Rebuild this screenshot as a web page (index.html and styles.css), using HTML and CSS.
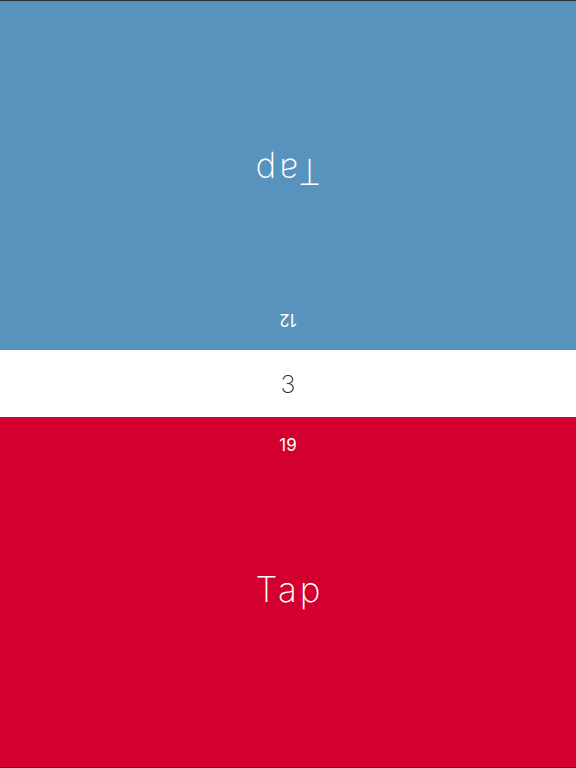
FILE: index.html
```html
<!DOCTYPE html>
<html lang="en">
<head>
<meta charset="utf-8">
<title>Tap Duel</title>
<link rel="stylesheet" href="styles.css">
</head>
<body>
  <main class="board">
    <section class="player player--blue player--flipped">
      <div class="player__score">12</div>
      <div class="player__tap">Tap</div>
    </section>
    <div class="timer">3</div>
    <section class="player player--red">
      <div class="player__score">19</div>
      <div class="player__tap">Tap</div>
    </section>
  </main>
</body>
</html>
```
FILE: styles.css
```css
html, body {
  margin: 0;
  padding: 0;
}

body {
  width: 576px;
  height: 768px;
  overflow: hidden;
  background: #26303a;
  font-family: Inter, "Helvetica Neue", "Liberation Sans", sans-serif;
  font-weight: 200;
}

.board {
  display: flex;
  flex-direction: column;
  height: 766px;
  margin-top: 1px;
}

.player {
  display: grid;
  color: #ffffff;
  height: 349px;
}

.player--blue {
  background: #5793bc;
}

.player--red {
  background: #d3002f;
  height: 350px;
}

/* the far player reads the board from the other side */
.player--flipped {
  transform: rotate(180deg);
}

.player__score,
.player__tap {
  grid-area: 1 / 1;
  justify-self: center;
}

.player__score {
  align-self: start;
  margin-top: 17px;
  font-size: 17px;
  line-height: 22px;
  font-weight: 400;
}

.player--flipped .player__score {
  margin-top: 19px;
}

.player__tap {
  align-self: center;
  margin-bottom: 6px;
  padding-left: 3px;
  font-size: 35px;
  line-height: 42px;
  letter-spacing: 3px;
}

.player--flipped .player__tap {
  margin-bottom: 0;
  margin-top: 6px;
}

.timer {
  height: 67px;
  background: #ffffff;
  color: #333333;
  display: flex;
  align-items: center;
  justify-content: center;
  font-size: 25px;
}
```
